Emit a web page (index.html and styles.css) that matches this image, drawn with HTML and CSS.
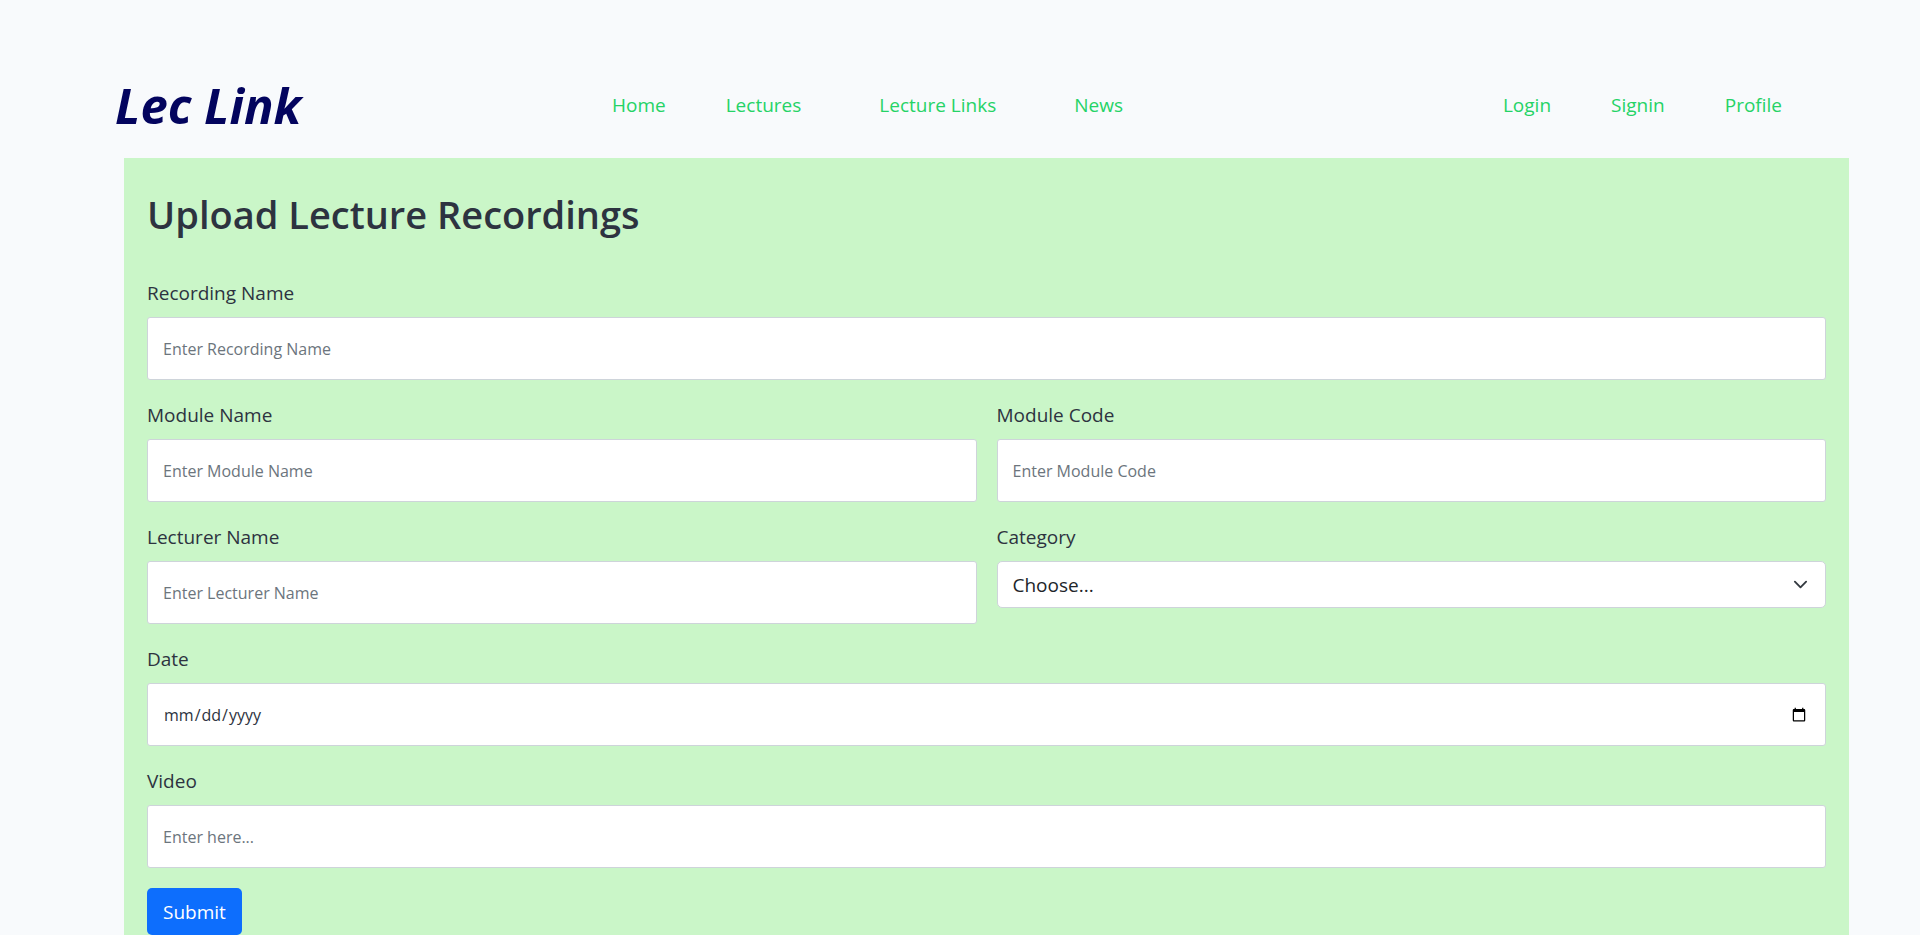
FILE: index.html
```html
<!DOCTYPE html>
<html lang="en">
<head>
<meta charset="utf-8">
<meta name="viewport" content="width=device-width, initial-scale=1">
<title>Lec Link</title>
<link rel="stylesheet" href="styles.css">
</head>
<body>
<header class="site-header">
  <div class="brand">Lec Link</div>
  <nav class="nav nav-main">
    <a href="#">Home</a>
    <a href="#">Lectures</a>
    <a href="#" class="wide">Lecture Links</a>
    <a href="#" class="wide">News</a>
  </nav>
  <nav class="nav nav-user">
    <a href="#">Login</a>
    <a href="#">Signin</a>
    <a href="#">Profile</a>
  </nav>
</header>
<main class="panel">
  <h1 class="title">Upload Lecture Recordings</h1>
  <form class="form">
    <div class="field full">
      <label for="recording">Recording Name</label>
      <input class="control" id="recording" type="text" placeholder="Enter Recording Name">
    </div>
    <div class="field">
      <label for="module">Module Name</label>
      <input class="control" id="module" type="text" placeholder="Enter Module Name">
    </div>
    <div class="field">
      <label for="code">Module Code</label>
      <input class="control" id="code" type="text" placeholder="Enter Module Code">
    </div>
    <div class="field">
      <label for="lecturer">Lecturer Name</label>
      <input class="control" id="lecturer" type="text" placeholder="Enter Lecturer Name">
    </div>
    <div class="field">
      <label for="category">Category</label>
      <div class="select-wrap">
        <select class="select" id="category"><option>Choose...</option></select>
        <svg class="chevron" viewBox="0 0 16 16" aria-hidden="true"><path d="m2 5 6 6 6-6"/></svg>
      </div>
    </div>
    <div class="field full">
      <label for="date">Date</label>
      <input class="control" id="date" type="date">
    </div>
    <div class="field full">
      <label for="video">Video</label>
      <input class="control" id="video" type="text" placeholder="Enter here...">
    </div>
    <button class="submit" type="submit">Submit</button>
  </form>
</main>
</body>
</html>
```
FILE: styles.css
```css
* { box-sizing: border-box; }

body {
  margin: 0;
  min-height: 100vh;
  display: flex;
  flex-direction: column;
  background: #f8fafc;
  color: #2d3340;
  font-family: "Segoe UI", "Open Sans", "Noto Sans", sans-serif;
  font-size: 19px;
  line-height: 30px;
}

.site-header {
  display: flex;
  align-items: center;
  height: 158px;
  padding: 52px 138px 0 115px;
}

.brand {
  flex: 0 0 497px;
  color: #03045e;
  font-size: 49px;
  font-weight: 700;
  font-style: italic;
  line-height: 60px;
}

.nav {
  display: flex;
  gap: 60px;
}

.nav a {
  color: #25d366;
  text-decoration: none;
}

.nav .wide { margin-left: 18px; }

.nav-user { margin-left: auto; }

.panel {
  flex: 1;
  margin: 0 71px 0 124px;
  padding: 32px 23px 0;
  background: #caf6c8;
}

.title {
  margin: 0 0 40px;
  font-size: 38px;
  font-weight: 600;
  line-height: 48px;
}

.form {
  display: grid;
  grid-template-columns: 1fr 1fr;
  gap: 20px;
}

.field {
  display: flex;
  flex-direction: column;
  gap: 9px;
}

.full { grid-column: 1 / -1; }

.control {
  width: 100%;
  height: 63px;
  padding: 0 16px 0 15px;
  border: 1px solid #ced4da;
  border-radius: 3px;
  background: #fff;
  color: #2d3340;
  font-family: inherit;
  font-size: 16px;
}

.control::placeholder {
  color: #6c757d;
  opacity: 1;
}

.select-wrap { position: relative; }

.select {
  display: block;
  width: 100%;
  height: 47px;
  padding: 0 45px 0 15px;
  appearance: none;
  border: 1px solid #ced4da;
  border-radius: 5px;
  background: #fff;
  color: #212529;
  font-family: inherit;
  font-size: 19px;
}

.chevron {
  position: absolute;
  top: 16px;
  right: 18px;
  width: 15px;
  height: 15px;
  fill: none;
  stroke: #343a40;
  stroke-width: 2;
  stroke-linecap: round;
  stroke-linejoin: round;
  pointer-events: none;
}

.submit {
  justify-self: start;
  height: 47px;
  padding: 0 16px;
  border: 0;
  border-radius: 5px;
  background: #0d6efd;
  color: #fff;
  font-family: inherit;
  font-size: 19px;
}
```
